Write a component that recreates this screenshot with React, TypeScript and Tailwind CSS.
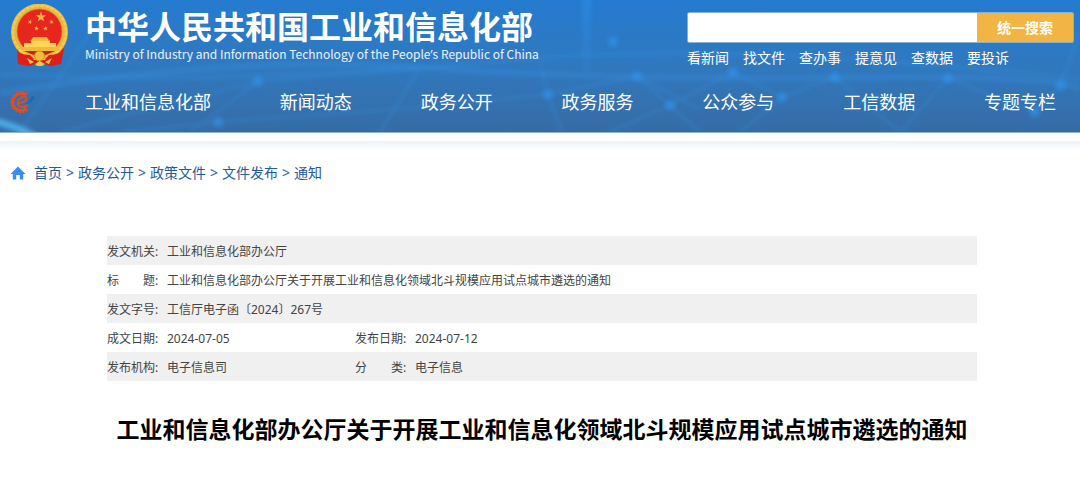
import type { ReactNode } from "react";

const navItems = ["工业和信息化部", "新闻动态", "政务公开", "政务服务", "公众参与", "工信数据", "专题专栏"];
const quickLinks = ["看新闻", "找文件", "查办事", "提意见", "查数据", "要投诉"];
const crumbs = ["首页", "政务公开", "政策文件", "文件发布", "通知"];

type Field = { label: string; value: string };
const rows: Field[][] = [
  [{ label: "发文机关:", value: "工业和信息化部办公厅" }],
  [{ label: "标　　题:", value: "工业和信息化部办公厅关于开展工业和信息化领域北斗规模应用试点城市遴选的通知" }],
  [{ label: "发文字号:", value: "工信厅电子函〔2024〕267号" }],
  [
    { label: "成文日期:", value: "2024-07-05" },
    { label: "发布日期:", value: "2024-07-12" },
  ],
  [
    { label: "发布机构:", value: "电子信息司" },
    { label: "分　　类:", value: "电子信息" },
  ],
];

const star = "M0 -1L0.24 -0.32L0.95 -0.31L0.38 0.12L0.59 0.81L0 0.4L-0.59 0.81L-0.38 0.12L-0.95 -0.31L-0.24 -0.32Z";

function Emblem() {
  return (
    <svg className="h-[62px] w-[60px] shrink-0" viewBox="0 0 60 62" aria-hidden="true">
      <path d="M7 45L8 60L20 62L30 58L40 62L51 60L54 44Z" fill="#d81e1a" />
      <circle cx="29.5" cy="28" r="28.5" fill="#e9b63c" />
      <circle cx="29.5" cy="28" r="26.5" fill="none" stroke="#f4cb55" strokeWidth="2.5" strokeDasharray="4 1" />
      <circle cx="29.5" cy="27.5" r="22.500" fill="#e8261f" stroke="#c98a26" strokeWidth="0.6" />
      <g fill="#f5b93b">
        <path d={star} transform="translate(31 13) scale(5.4)" />
        <path d={star} transform="translate(20 18) rotate(15) scale(2.5)" />
        <path d={star} transform="translate(41.500 18) rotate(-15) scale(2.5)" />
        <path d={star} transform="translate(26.500 24.500) rotate(10) scale(2.5)" />
        <path d={star} transform="translate(35.500 24.500) rotate(-10) scale(2.5)" />
        <path d="M23 33L37 33L38 35L40 37L20 37L22 35Z" />
        <path d="M21 37L40 37L40 39L46 39L46 43L14 43L14 39L21 39Z" fill="#ffd65a" />
        <path d="M12 43H48L46 47H14Z" fill="#f2bd36" />
      </g>
      <path d="M14 47H45L38 50Q30 54 21 50Z" fill="#c8201b" />
      <circle cx="29.5" cy="52" r="5" fill="#f1bd3b" stroke="#cf8b24" strokeWidth="1" />
      <path d="M4 43Q8 51 20 51L24 55L18 61L8 59Q12 53 4 43ZM55 43Q51 51 39 51L35 55L41 61L51 59Q47 53 55 43Z" fill="#df1e1b" />
      <path d="M17 54L24 58L20 60ZM42 54L35 58L39 60ZM25 60L29.500 57L35 60L32 62H27Z" fill="#f5c944" />
    </svg>
  );
}

function GearLogo() {
  return (
    <svg className="h-6 w-[27px] shrink-0" viewBox="0 0 27 24" fill="none" aria-hidden="true">
      <path d="M19.500 4A10.200 10.200 0 1 0 19.500 20.200" stroke="#e84b1c" strokeWidth="2" strokeDasharray="2 1.600" />
      <path d="M18 5.200A8.400 8.400 0 1 0 18.500 18.500" stroke="#e84b1c" strokeWidth="2.800" />
      <path d="M10 13C14 13.300 18.800 11 18.500 8.300C18.200 5.800 13.500 6.300 11 9.500C8.500 12.800 9.500 17 14 17C16.500 17 18.500 16.300 20 15" stroke="#e84b1c" strokeWidth="1.800" />
      <path d="M25.800 6.500C25.500 10 23 12.500 18 14C21.500 12 23.300 9.500 23.500 7Z" fill="#1668b8" stroke="#1668b8" strokeWidth="0.8" />
    </svg>
  );
}

function NetworkBackdrop() {
  const nodes = [
    [258, 82], [218, 123], [548, 95], [637, 77], [670, 106], [733, 73], [782, 98], [835, 78], [948, 79], [1061, 86], [1035, 113], [613, 42],
  ];
  return (
    <svg className="absolute inset-0 h-full w-full" viewBox="0 0 1080 133" preserveAspectRatio="none" aria-hidden="true">
      <defs>
        <filter id="soft" x="-20%" y="-20%" width="140%" height="140%">
          <feGaussianBlur stdDeviation="2" />
        </filter>
        <radialGradient id="node">
          <stop offset="0" stopColor="#2f94ee" stopOpacity="0.7" />
          <stop offset="1" stopColor="#2f94ee" stopOpacity="0" />
        </radialGradient>
        <linearGradient id="beam" x1="0" y1="0" x2="0" y2="1">
          <stop offset="0" stopColor="#2f94ee" stopOpacity="0.45" />
          <stop offset="1" stopColor="#2f94ee" stopOpacity="0.1" />
        </linearGradient>
      </defs>
      <g filter="url(#soft)" fill="none" stroke="#3599ee">
        <rect x="582" y="-4" width="9" height="76" fill="url(#beam)" stroke="none" />
        <path d="M0 94Q230 55 420 68T835 78T1080 90" strokeWidth="5" strokeOpacity="0.3" />
        <path d="M0 75Q260 85 493 62T1080 80" strokeWidth="4" strokeOpacity="0.25" />
        <path d="M60 133L258 82L420 68M120 133L218 123L420 108L548 95L637 77M540 62L548 95L562 133M637 77L670 106L700 133M637 77L700 110M670 106L733 73L782 98L835 78M610 133L670 106M782 98L740 133M835 78L900 133L948 79L1035 113L1061 86L1080 30M100 20L20 133M258 82L190 133M420 68L380 133" strokeWidth="2" strokeOpacity="0.35" />
        <path d="M-5 122Q18 128 36 138" stroke="#55c5ff" strokeWidth="7" strokeOpacity="0.7" />
      </g>
      {nodes.map(([x, y]) => (
        <circle key={`${x}-${y}`} cx={x} cy={y} r="8" fill="url(#node)" />
      ))}
    </svg>
  );
}

function Cell({ field, span }: { field: Field; span?: number }): ReactNode {
  return (
    <>
      <th scope="row" className="p-0 pt-0.5 text-left font-normal">{field.label}</th>
      <td colSpan={span} className="p-0 pt-0.5">{field.value}</td>
    </>
  );
}

export default function App() {
  return (
    <div className="min-h-screen bg-white font-['Noto_Sans','Noto_Sans_CJK_SC',sans-serif]">
      <header className="relative border-b border-[#8fb0d0] bg-linear-to-b from-[#247bd0] via-[#3078be] to-[#366ca5] text-white">
        <NetworkBackdrop />
        <div className="relative flex items-start justify-between pr-[6px] pl-[10px]">
          <a href="#" className="flex gap-[15px] pt-1">
            <Emblem />
            <span className="flex flex-col gap-1 pt-1 font-['Noto_Sans_CJK_SC',sans-serif]">
              <span className="text-[32px] leading-[34px] font-bold whitespace-nowrap">中华人民共和国工业和信息化部</span>
              <span className="text-[12px] leading-4 whitespace-nowrap text-white/90">
                Ministry of Industry and Information Technology of the People
                <span className="font-['Noto_Sans']">’</span>s Republic of China
              </span>
            </span>
          </a>
          <div className="w-[387px] pt-3">
            <form className="flex h-[31px] overflow-hidden rounded-xs border border-[#8ab0cf]" onSubmit={(e) => e.preventDefault()}>
              <input type="search" aria-label="搜索" className="min-w-0 flex-1 bg-white px-2 text-sm text-gray-800 outline-none" />
              <button type="submit" className="w-24 bg-[#f2b544] text-[14px] font-bold">统一搜索</button>
            </form>
            <nav aria-label="快捷入口" className="flex gap-[14px] pt-1 text-[14px] leading-[22px]">
              {quickLinks.map((item) => (
                <a key={item} href="#">{item}</a>
              ))}
            </nav>
          </div>
        </div>
        <div className="relative flex items-center pt-[17px] pr-6 pb-[14px] pl-2">
          <GearLogo />
          <nav aria-label="主导航" className="ml-[50px] flex flex-1 justify-between text-[18px] leading-8">
            {navItems.map((item) => (
              <a key={item} href="#" className="whitespace-nowrap">{item}</a>
            ))}
          </nav>
        </div>
      </header>
      <div className="mt-2 h-[10px] bg-linear-to-b from-[#edf3f8] to-white" />

      <main>
        <nav aria-label="面包屑" className="flex items-center px-[10px] pt-3 text-[14px] leading-5 text-[#1f5aa0]">
          <svg className="mr-2 h-[14px] w-4" viewBox="0 0 16 14" aria-hidden="true">
            <path d="M8 0.500L0.500 8H2.800V13.500H6.200V9H9.800V13.500H13.200V8H15.500Z" fill="#3b8df5" />
          </svg>
          <ol className="flex">
            {crumbs.map((item, i) => (
              <li key={item} className="flex">
                {i > 0 && <span className="w-4 text-center">&gt;</span>}
                <a href="#">{item}</a>
              </li>
            ))}
          </ol>
        </nav>

        <div className="pt-[53px] pr-[103px] pl-[107px]">
          <table className="w-full table-fixed border-collapse text-[12px] text-[#444]">
            <colgroup>
              <col className="w-[60px]" />
              <col className="w-[188px]" />
              <col className="w-[60px]" />
              <col />
            </colgroup>
            <tbody>
              {rows.map((fields) => (
                <tr key={fields[0].label} className="h-[29px] odd:bg-[#f0f0f0]">
                  {fields.map((field) => (
                    <Cell key={field.label} field={field} span={fields.length === 1 ? 3 : undefined} />
                  ))}
                </tr>
              ))}
            </tbody>
          </table>
          <h1 className="pt-8 pb-8 text-center text-[23px] leading-8 font-bold text-black">
            工业和信息化部办公厅关于开展工业和信息化领域北斗规模应用试点城市遴选的通知
          </h1>
        </div>
      </main>
    </div>
  );
}
